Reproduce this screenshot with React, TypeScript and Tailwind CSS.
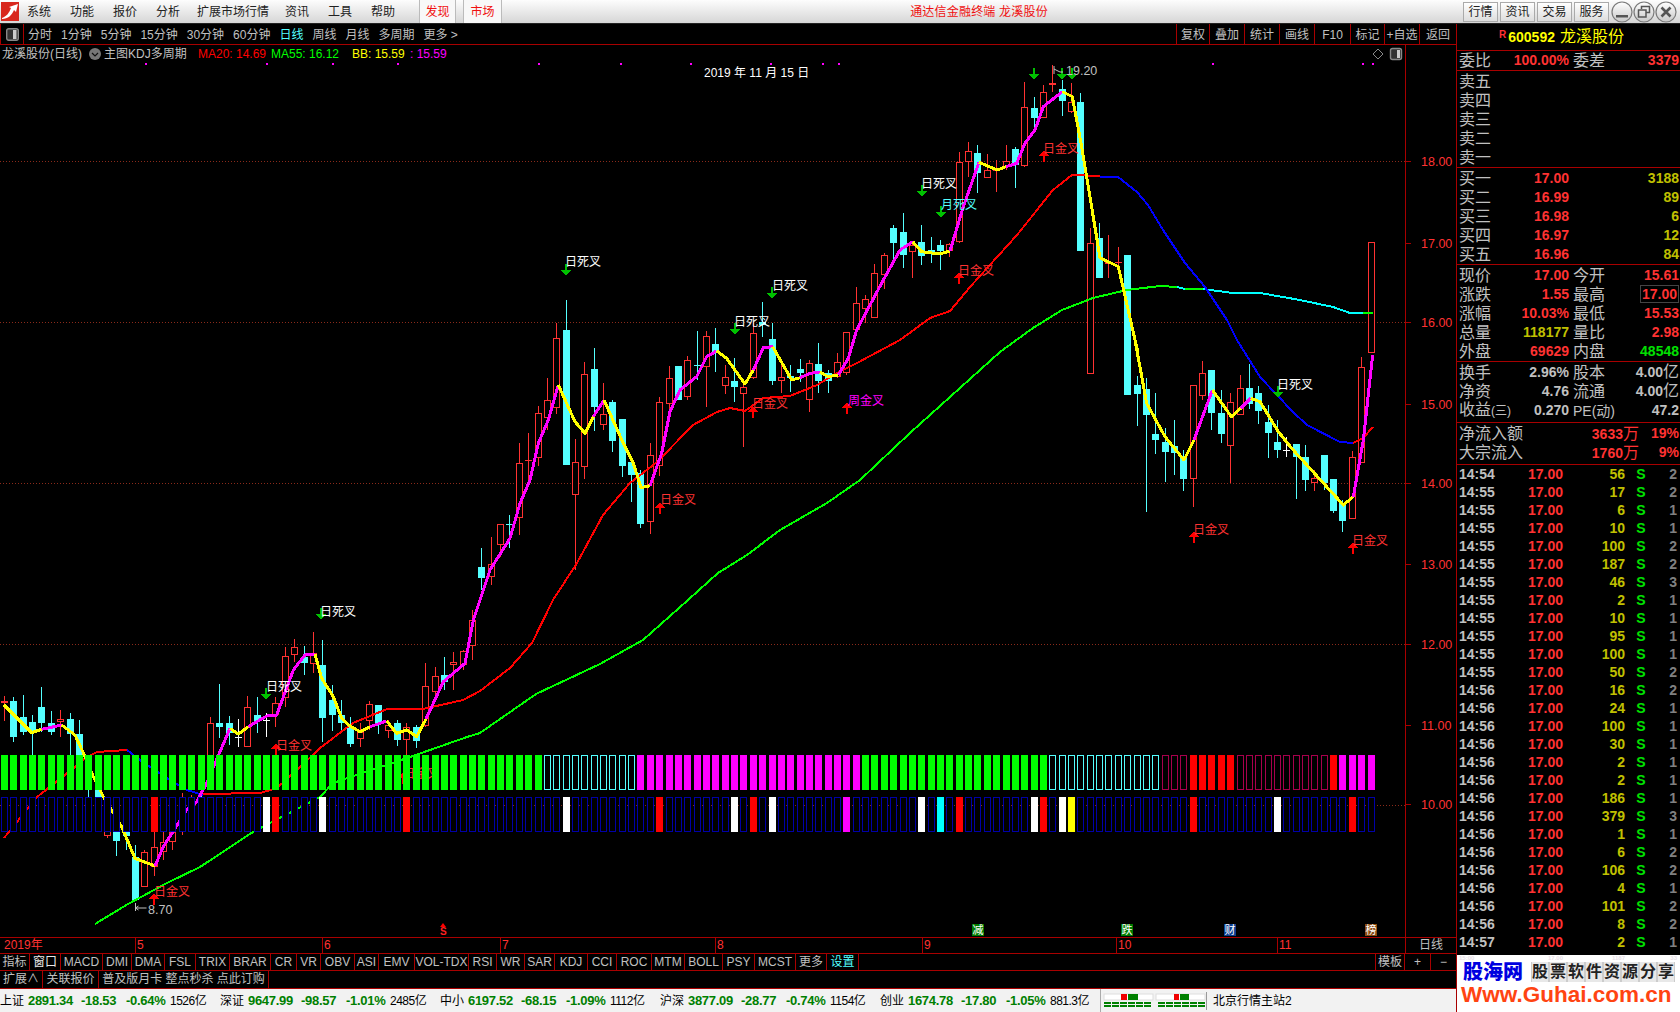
import React from "react";

type P = [number, number];
const z = (ox: number, oy: number, pts: P[]): P[] => pts.map(([X, Y]) => [ox + X / 3, oy + Y / 3] as P);
const z7 = (p: P[]) => z(0, 620, p);
const z8 = (p: P[]) => z(480, 280, p);
const z9 = (p: P[]) => z(900, 50, p);
const z10 = (p: P[]) => z(1000, 340, p);
const str = (p: P[]) => p.map((q) => q.join(",")).join(" ");

const RED = "#ff3232";
const CYAN = "#54ffff";

// idx, high, bodyTop, bodyBottom, low, colour
type C = [number, number, number, number, number, "r" | "c" | "w"];
const candles: C[] = [
  [0, 696, 701, 703, 721, "r"], [1, 697, 701, 737, 742, "c"], [2, 695, 717, 732, 735, "c"], [3, 715, 722, 732, 755, "c"],
  [4, 687, 707, 723, 732, "c"], [5, 711, 723, 732, 735, "c"], [6, 710, 719, 722, 737, "r"], [7, 713, 719, 734, 755, "c"],
  [8, 720, 734, 765, 785, "c"], [9, 760, 770, 790, 797, "c"], [10, 780, 785, 798, 800, "c"], [11, 800, 820, 836, 838, "r"],
  [12, 800, 815, 841, 856, "c"], [13, 810, 820, 836, 850, "c"], [14, 845, 857, 900, 900, "c"], [15, 850, 852, 887, 887, "r"],
  [16, 832, 847, 867, 876, "r"], [17, 830, 842, 852, 860, "r"], [18, 825, 832, 842, 850, "r"], [19, 793, 805, 830, 835, "r"],
  [20, 795, 800, 825, 830, "r"], [21, 795, 797, 828, 830, "c"], [22, 717, 723, 770, 790, "r"], [23, 684, 723, 727, 738, "c"],
  [24, 716, 723, 733, 745, "c"], [25, 719, 737, 737, 747, "w"], [26, 696, 707, 747, 747, "r"], [27, 697, 715, 721, 733, "c"],
  [28, 713, 720, 720, 737, "w"], [29, 697, 703, 715, 727, "r"], [30, 647, 656, 698, 707, "r"], [31, 639, 647, 655, 662, "r"],
  [32, 646, 657, 663, 675, "c"], [33, 632, 653, 664, 673, "r"], [34, 640, 665, 718, 742, "c"], [35, 685, 700, 715, 731, "c"],
  [36, 700, 715, 723, 733, "c"], [37, 717, 727, 744, 747, "c"], [38, 723, 732, 739, 747, "r"], [39, 701, 704, 721, 730, "r"],
  [40, 705, 705, 723, 734, "c"], [41, 720, 725, 731, 738, "r"], [42, 720, 723, 740, 746, "c"], [43, 723, 727, 740, 755, "r"],
  [44, 725, 727, 741, 748, "c"], [45, 663, 686, 726, 727, "r"], [46, 667, 676, 692, 700, "r"], [47, 657, 675, 682, 690, "c"],
  [48, 652, 662, 665, 690, "r"], [49, 650, 651, 665, 670, "r"], [50, 610, 620, 646, 660, "r"], [51, 548, 567, 578, 590, "c"],
  [52, 537, 564, 577, 585, "r"], [53, 524, 524, 545, 557, "r"], [54, 515, 524, 525, 548, "c"], [55, 443, 463, 518, 535, "r"],
  [56, 433, 460, 461, 480, "r"], [57, 406, 413, 458, 466, "r"], [58, 378, 400, 418, 430, "r"], [59, 323, 338, 408, 414, "r"],
  [60, 300, 330, 465, 465, "c"], [61, 439, 462, 495, 570, "r"], [62, 362, 374, 467, 479, "r"], [63, 348, 369, 407, 431, "c"],
  [64, 383, 414, 425, 430, "r"], [65, 400, 402, 441, 452, "c"], [66, 419, 419, 466, 477, "c"], [67, 460, 462, 475, 502, "c"],
  [68, 470, 473, 524, 528, "c"], [69, 443, 455, 522, 534, "r"], [70, 397, 402, 466, 476, "r"], [71, 366, 378, 404, 410, "r"],
  [72, 366, 366, 400, 400, "c"], [73, 356, 360, 397, 400, "r"], [74, 331, 365, 366, 380, "c"], [75, 331, 336, 367, 407, "r"],
  [76, 328, 344, 352, 372, "c"], [77, 365, 377, 386, 394, "r"], [78, 358, 381, 387, 402, "c"], [79, 382, 387, 394, 447, "r"],
  [80, 322, 333, 378, 379, "r"], [81, 302, 322, 325, 337, "c"], [82, 323, 339, 381, 385, "c"], [83, 360, 377, 381, 393, "r"],
  [84, 365, 376, 378, 392, "c"], [85, 359, 369, 373, 382, "c"], [86, 360, 363, 400, 412, "r"], [87, 343, 364, 381, 393, "c"],
  [88, 370, 373, 381, 393, "c"], [89, 353, 362, 377, 378, "r"], [90, 332, 332, 373, 375, "r"], [91, 287, 303, 330, 330, "r"],
  [92, 295, 299, 309, 323, "r"], [93, 264, 273, 318, 318, "r"], [94, 253, 255, 275, 289, "r"], [95, 225, 228, 243, 262, "c"],
  [96, 213, 232, 255, 268, "c"], [97, 242, 245, 252, 278, "r"], [98, 225, 242, 256, 265, "c"], [99, 237, 250, 253, 263, "c"],
  [100, 240, 245, 251, 270, "c"], [101, 243, 244, 251, 257, "r"], [102, 152, 162, 242, 243, "r"], [103, 142, 151, 162, 177, "r"],
  [104, 145, 153, 173, 193, "c"], [105, 154, 170, 178, 178, "r"], [106, 160, 170, 171, 192, "r"], [107, 145, 161, 167, 170, "r"],
  [108, 147, 149, 165, 188, "c"], [109, 82, 107, 166, 167, "r"], [110, 97, 108, 118, 128, "c"], [111, 85, 92, 118, 118, "r"],
  [112, 65, 83, 85, 92, "r"], [113, 80, 89, 101, 116, "c"], [114, 83, 102, 112, 113, "r"], [115, 93, 102, 251, 251, "c"],
  [116, 228, 243, 374, 374, "r"], [117, 223, 238, 278, 278, "c"], [118, 235, 262, 264, 278, "r"], [119, 247, 262, 263, 273, "r"],
  [120, 255, 255, 395, 395, "c"], [121, 376, 385, 394, 426, "c"], [122, 378, 389, 415, 512, "c"], [123, 393, 434, 440, 454, "c"],
  [124, 428, 442, 452, 482, "c"], [125, 420, 446, 453, 475, "c"], [126, 450, 457, 479, 491, "c"], [127, 385, 385, 479, 507, "r"],
  [128, 361, 373, 396, 400, "r"], [129, 370, 370, 413, 430, "c"], [130, 390, 413, 434, 443, "c"], [131, 393, 402, 446, 483, "r"],
  [132, 375, 388, 415, 415, "r"], [133, 364, 388, 404, 409, "c"], [134, 386, 393, 411, 424, "c"], [135, 405, 422, 433, 458, "c"],
  [136, 420, 442, 450, 458, "c"], [137, 437, 450, 450, 457, "w"], [138, 444, 444, 457, 499, "c"], [139, 445, 457, 480, 491, "c"],
  [140, 470, 478, 483, 491, "r"], [141, 455, 455, 483, 490, "c"], [142, 479, 479, 511, 513, "c"], [143, 500, 503, 521, 532, "c"],
  [144, 451, 457, 519, 519, "r"], [145, 357, 367, 463, 463, "r"], [146, 242, 242, 353, 353, "r"],
];

const kdj: { c: string; p: P[] }[] = [
  { c: "y", p: z7([[12, 255], [95, 338], [125, 328]]) },
  { c: "m", p: z7([[125, 328], [185, 315]]) },
  { c: "y", p: z7([[185, 315], [225, 345], [260, 420], [280, 470], [310, 530], [335, 570], [365, 620], [405, 715], [465, 738]]) },
  { c: "m", p: z7([[465, 738], [490, 680], [535, 610], [560, 570], [590, 545], [620, 490], [645, 430], [690, 325]]) },
  { c: "y", p: z7([[690, 325], [715, 342], [745, 320]]) },
  { c: "m", p: z7([[745, 320], [800, 288], [830, 285], [880, 150], [915, 105], [945, 103]]) },
  { c: "y", p: z7([[945, 103], [965, 175], [1000, 230], [1025, 295], [1050, 318], [1080, 335], [1110, 320]]) },
  { c: "m", p: z7([[1110, 320], [1160, 303]]) },
  { c: "y", p: z7([[1160, 303], [1190, 340], [1220, 330], [1250, 350], [1278, 297]]) },
  { c: "m", p: [...z7([[1278, 297], [1330, 185], [1395, 130], [1420, 0]]), ...z8([[0, 960], [30, 870], [90, 775], [120, 670], [150, 600], [175, 490], [205, 420], [235, 315]])] },
  { c: "y", p: z8([[235, 315], [285, 425], [315, 460], [340, 410]]) },
  { c: "m", p: z8([[340, 410], [372, 360]]) },
  { c: "y", p: z8([[372, 360], [430, 490], [460, 550], [483, 623], [510, 617]]) },
  { c: "m", p: z8([[510, 617], [545, 520], [570, 395], [600, 330], [650, 290], [680, 230], [710, 213]]) },
  { c: "y", p: z8([[710, 213], [740, 235], [795, 312], [820, 270]]) },
  { c: "m", p: z8([[820, 270], [850, 203], [878, 200]]) },
  { c: "y", p: z8([[878, 200], [935, 300], [960, 293]]) },
  { c: "m", p: z8([[960, 293], [990, 280], [1020, 277]]) },
  { c: "y", p: z8([[1020, 277], [1045, 290], [1075, 285]]) },
  { c: "m", p: [...z8([[1075, 285], [1105, 235], [1130, 150], [1210, 0]]), ...z9([[0, 600], [38, 575]])] },
  { c: "y", p: z9([[38, 575], [65, 605], [120, 612], [150, 603]]) },
  { c: "m", p: z9([[150, 603], [190, 470], [237, 337]]) },
  { c: "y", p: z9([[237, 337], [292, 360], [318, 350]]) },
  { c: "m", p: z9([[318, 350], [350, 340], [375, 280], [405, 240], [430, 170], [487, 125]]) },
  { c: "y", p: [...z9([[487, 125], [517, 140], [545, 290], [600, 623], [655, 650], [712, 900]]), ...z10([[405, 0], [440, 190], [495, 290], [552, 360], [582, 300]])] },
  { c: "m", p: z10([[582, 300], [637, 150]]) },
  { c: "y", p: z10([[637, 150], [694, 230], [722, 205]]) },
  { c: "m", p: z10([[722, 205], [752, 175]]) },
  { c: "y", p: z10([[752, 175], [780, 185], [835, 275], [875, 325], [1030, 495], [1060, 470]]) },
  { c: "m", p: z10([[1060, 470], [1090, 300], [1118, 45]]) },
];

const ma20Red1: P[] = [[4, 838], [37, 797], [75, 767], [85, 758], [97, 752], [127, 750]];
const ma20Blue1: P[] = [[127, 750], [140, 760], [168, 779], [187, 790], [203, 795]];
const ma20Red2: P[] = [[203, 794], [260, 793], [277, 788], [300, 767], [320, 748], [353, 723], [387, 709], [423, 709], [463, 700], [480, 691], [510, 668], [532, 643], [553, 600], [577, 563], [603, 515], [630, 483], [657, 462], [693, 425], [717, 412], [730, 408], [745, 411], [763, 398], [790, 396], [817, 385], [837, 373], [857, 363], [900, 340], [930, 318], [950, 311], [970, 287], [1017, 235], [1053, 190], [1072, 175], [1100, 176]];
const ma20Blue2: P[] = [[1100, 177], [1118, 177], [1137, 192], [1148, 205], [1163, 230], [1185, 263], [1205, 287], [1227, 320], [1237, 340], [1260, 377], [1293, 412], [1307, 425], [1340, 442], [1353, 443]];
const ma20Red3: P[] = [[1353, 443], [1363, 438], [1373, 427]];
const ma55A: P[] = [[95, 924], [128, 904], [167, 883], [200, 867], [253, 832], [320, 797], [333, 783], [410, 757], [467, 737], [480, 733], [536, 694], [600, 664], [643, 640], [688, 600], [718, 573], [747, 555], [780, 530], [827, 503], [860, 480], [910, 433], [960, 388], [1000, 352], [1033, 328], [1062, 310], [1093, 298], [1127, 290], [1160, 286], [1177, 287]];

const stripOne = (i: number): [string, string] => {
  if (i <= 57) return ["#00ff00", "#00ff00"];
  if (i <= 67) return ["#000", CYAN];
  if (i <= 91) return ["#ff00ff", "#ff00ff"];
  if (i <= 111) return ["#00ff00", "#00ff00"];
  if (i <= 123) return ["#000", CYAN];
  if (i <= 126) return ["#000", "#a8004c"];
  if (i <= 131) return ["#ff0000", "#ff0000"];
  if (i <= 141) return ["#000", "#a8004c"];
  if (i === 142) return ["#ff0000", "#ff0000"];
  return ["#ff00ff", "#ff00ff"];
};
const specials: Record<number, string> = {
  16: "#ff0000", 28: "#fff", 29: "#ff0000", 34: "#fff", 43: "#ff0000", 60: "#fff", 70: "#ff0000", 78: "#fff", 80: "#ff0000", 82: "#fff",
  90: "#ff00ff", 98: "#fff", 100: "#00ffff", 102: "#ff0000", 110: "#fff", 111: "#ff0000", 113: "#fff", 114: "#ffff00", 127: "#ff0000", 136: "#fff", 144: "#ff0000",
};

const labels: [string, number, number, string][] = [
  ["日死叉", 266, 691, "#fff"], ["日金叉", 276, 750, RED], ["日金叉", 154, 896, RED], ["日死叉", 320, 616, "#fff"],
  ["日死叉", 734, 326, "#fff"], ["日死叉", 772, 290, "#fff"], ["日金叉", 752, 408, RED], ["周金叉", 848, 405, "#ff00ff"],
  ["日金叉", 660, 504, RED], ["日死叉", 565, 266, "#fff"], ["日死叉", 921, 188, "#fff"], ["月死叉", 941, 209, CYAN],
  ["日金叉", 958, 275, RED], ["日金叉", 1043, 153, RED], ["日死叉", 1277, 389, "#fff"], ["日金叉", 1193, 534, RED],
  ["日金叉", 1352, 545, RED], ["日金叉", 403, 778, RED],
];
const downArrows: [number, number][] = [[266, 688], [321, 608], [735, 323], [772, 287], [566, 264], [922, 185], [941, 206], [1278, 386], [1034, 68], [1062, 68], [1072, 68]];
const upArrows: [number, number][] = [[276, 743], [154, 893], [753, 406], [847, 402], [660, 502], [959, 272], [1044, 150], [1194, 531], [1353, 542], [403, 772]];
const axis: [string, number][] = [["18.00", 161], ["17.00", 243], ["16.00", 322], ["15.00", 404], ["14.00", 483], ["13.00", 564], ["12.00", 644], ["11.00", 725], ["10.00", 804]];
const dots = [145, 266, 332, 397, 538, 620, 690, 770, 822, 838, 1212, 1362, 1372];

function Chart() {
  return (
    <svg viewBox="0 45 1456 892" width={1456} height={892} className="block">
      <g shapeRendering="crispEdges">
        {[161, 322, 483, 644, 805].map((y) => (
          <line key={y} x1={0} x2={1405} y1={y + 0.5} y2={y + 0.5} stroke="#8a2a1a" strokeDasharray="1 2" />
        ))}
        {candles.map(([i, hi, top, bot, lo, c]) => {
          const left = Math.round(1 + i * 9.36);
          const col = c === "r" ? RED : c === "c" ? CYAN : "#fff";
          const flat = bot - top <= 1;
          return (
            <g key={i}>
              <rect x={left + 3} y={hi} width={1} height={lo - hi} fill={col} />
              {flat ? (
                <rect x={left} y={top} width={7} height={1} fill={col} />
              ) : c === "c" ? (
                <rect x={left} y={top} width={7} height={bot - top} fill={col} />
              ) : (
                <rect x={left + 0.5} y={top + 0.5} width={6} height={bot - top - 1} fill="#000" stroke={col} />
              )}
            </g>
          );
        })}
        <polyline points={str(ma55A)} fill="none" stroke="#00ff00" strokeWidth={2} />
        <polyline points={str([[1177, 287], [1185, 289]])} fill="none" stroke="#00ffff" strokeWidth={2} />
        <polyline points={str([[1185, 289], [1203, 289]])} fill="none" stroke="#00ff00" strokeWidth={2} />
        <polyline points={str([[1203, 289], [1233, 293], [1260, 293], [1300, 300], [1333, 307], [1350, 313], [1363, 313]])} fill="none" stroke="#00ffff" strokeWidth={2} />
        <polyline points={str([[1363, 313], [1373, 313]])} fill="none" stroke="#00ff00" strokeWidth={2} />
        {[ma20Red1, ma20Red2, ma20Red3].map((p, i) => (
          <polyline key={i} points={str(p)} fill="none" stroke="#ff0000" strokeWidth={2} />
        ))}
        {[ma20Blue1, ma20Blue2].map((p, i) => (
          <polyline key={i} points={str(p)} fill="none" stroke="#0000ff" strokeWidth={2} />
        ))}
        {kdj.map((s, i) => (
          <polyline key={i} points={str(s.p)} fill="none" stroke={s.c === "y" ? "#ffff00" : "#ff00ff"} strokeWidth={3} strokeLinejoin="round" />
        ))}
        {downArrows.map(([x, y], i) => (
          <path key={i} d={`M${x - 1} ${y}h2v6h4l-5 6l-5 -6h4z`} fill="#00c000" />
        ))}
        {upArrows.map(([x, y], i) => (
          <path key={i} d={`M${x} ${y}l5 6h-4v6h-2v-6h-4z`} fill="#ff0000" />
        ))}
      </g>
      {labels.map(([t, x, y, c], i) => (
        <text key={i} x={x} y={y} fill={c} fontSize={12}>{t}</text>
      ))}
      <g shapeRendering="crispEdges">
        {Array.from({ length: 147 }, (_, i) => {
          const x = Math.round(1 + i * 9.36);
          const [f, s] = stripOne(i);
          const sp = specials[i];
          return (
            <g key={i}>
              <rect x={x + 0.5} y={755.5} width={6} height={34} fill={f} stroke={s} />
              <rect x={x + 0.5} y={797.5} width={6} height={34} fill={sp ?? "#000"} stroke={sp ?? "#0000a8"} />
            </g>
          );
        })}
        {dots.map((x) => (
          <rect key={x} x={x} y={63} width={2} height={2} fill="#ff00ff" />
        ))}
        <line x1={1405.5} x2={1405.5} y1={45} y2={937} stroke="#a80000" />
        {axis.map(([, y]) => (
          <rect key={y} x={1405} y={y} width={6} height={1} fill="#a80000" />
        ))}
      </g>
      {axis.map(([t, y]) => (
        <text key={t} x={1421} y={y + 5} fill={RED} fontSize={12.5}>{t}</text>
      ))}
      <text x={2} y={58} fill="#c0c0c0" fontSize={12}>龙溪股份(日线)</text>
      <circle cx={95} cy={54} r={6} fill="#777" />
      <path d="M92 53l3 3l3 -3" fill="none" stroke="#111" strokeWidth={1.2} />
      <text x={104} y={58} fill="#c0c0c0" fontSize={12}>主图KDJ多周期</text>
      <text x={198} y={58} fill="#ff0000" fontSize={12}>MA20: 14.69</text>
      <text x={271} y={58} fill="#00ff00" fontSize={12}>MA55: 16.12</text>
      <text x={352} y={58} fill="#ffff00" fontSize={12}>BB: 15.59</text>
      <text x={410} y={58} fill="#ff00ff" fontSize={12}>: 15.59</text>
      <text x={704} y={77} fill="#fff" fontSize={12}>2019 年 11 月 15 日</text>
      <path d="M1378 49l5 5l-5 5l-5 -5z" fill="none" stroke="#888" />
      <rect x={1390.5} y={48.5} width={11} height={11} rx={2} fill="#333" stroke="#888" strokeWidth={1.4} />
      <rect x={1397} y={50} width={3} height={8} fill="#ccc" />
      <path d="M135.5 903v8M135.5 908h11M135.5 908l3 -2M135.5 908l3 2" stroke="#c0c0c0" fill="none" />
      <text x={148} y={914} fill="#c0c0c0" fontSize={12.5}>8.70</text>
      <path d="M1054 66v8M1054 69l6 3h3" stroke="#c0c0c0" fill="none" />
      <text x={1066} y={75} fill="#c0c0c0" fontSize={12.5}>19.20</text>
      <path d="M443 923l3 4h-6z" fill="#ff0000" />
      <text x={440} y={935} fill="#ff2020" fontSize={10} fontWeight={700}>S</text>
      <rect x={972} y={924} width={12} height={12} fill="#007a00" />
      <text x={972.5} y={934} fill="#fff" fontSize={11}>减</text>
      <rect x={1121} y={924} width={12} height={12} fill="#007a00" />
      <text x={1121.5} y={934} fill="#fff" fontSize={11}>跌</text>
      <rect x={1224} y={924} width={12} height={12} fill="#0c3c8c" />
      <text x={1224.5} y={934} fill="#fff" fontSize={11}>财</text>
      <rect x={1365} y={924} width={12} height={12} fill="#8a4a10" />
      <text x={1365.5} y={934} fill="#fff" fontSize={11}>榜</text>
    </svg>
  );
}

function WinBtn({ kind }: { kind: "min" | "max" | "close" }) {
  return (
    <svg width={22} height={22} viewBox="0 0 22 22">
      <defs>
        <linearGradient id={`b${kind}`} x1="0" y1="0" x2="0" y2="1">
          <stop offset="0" stopColor="#ffffff" />
          <stop offset="1" stopColor="#c8c8c8" />
        </linearGradient>
      </defs>
      <circle cx={11} cy={11} r={10} fill={`url(#b${kind})`} stroke="#7a7a7a" strokeWidth={1.2} />
      {kind === "min" && <rect x={5} y={14} width={12} height={2.5} fill="#555" />}
      {kind === "max" && (
        <path d="M8.5 8V5.5h8v6h-3M5.5 9h7.5v7H5.5z" fill="none" stroke="#555" strokeWidth={1.5} />
      )}
      {kind === "close" && <path d="M6.5 6.5l9 9M15.5 6.5l-9 9" stroke="#555" strokeWidth={2.6} />}
    </svg>
  );
}

function TopBar() {
  const item = "text-[12px] text-[#222]";
  return (
    <div className="flex h-[24px] items-center border-b border-[#222] bg-gradient-to-b from-[#fdfdfd] to-[#d6d6d6]">
      <svg width={18} height={19} viewBox="0 0 18 19" className="ml-[1px] shrink-0">
        <rect width={18} height={19} fill="#d8281e" />
        <path d="M1 16C6 14 8 11 10 6L8 5L17 2L15 10L13 8C11 13 7 17 1 17Z" fill="#fff" />
      </svg>
      <span className={`${item} ml-[8px]`}>系统</span>
      <span className={`${item} ml-[19px]`}>功能</span>
      <span className={`${item} ml-[19px]`}>报价</span>
      <span className={`${item} ml-[19px]`}>分析</span>
      <span className={`${item} ml-[17px]`}>扩展市场行情</span>
      <span className={`${item} ml-[16px]`}>资讯</span>
      <span className={`${item} ml-[19px]`}>工具</span>
      <span className={`${item} ml-[19px]`}>帮助</span>
      <span className="ml-[24px] flex h-full w-[37px] items-center justify-center border-x border-[#bbb] bg-[#f8f8f8] text-[12px] text-[#f01010]">发现</span>
      <span className="ml-[7px] flex h-full w-[39px] items-center justify-center border-x border-[#bbb] bg-[#f8f8f8] text-[12px] text-[#f01010]">市场</span>
      <span className="ml-[408px] text-[12px] tracking-[0.2px] text-[#f01010]">通达信金融终端 龙溪股份</span>
      <div className="ml-auto flex items-center">
        {["行情", "资讯", "交易", "服务"].map((t) => (
          <span key={t} className="mr-[2px] flex h-[20px] w-[35px] items-center justify-center border border-[#aaa] bg-gradient-to-b from-[#fff] to-[#ddd] text-[12px] text-[#222]">{t}</span>
        ))}
        <div className="mr-[3px] flex">
          <WinBtn kind="min" />
          <WinBtn kind="max" />
          <WinBtn kind="close" />
        </div>
      </div>
    </div>
  );
}

function Toolbar() {
  return (
    <div className="flex h-[21px] items-center border-b border-[#a80000] text-[12px] text-[#c0c0c0]">
      <div className="flex h-full w-[24px] items-center justify-center border-x border-[#a80000]">
        <svg width={13} height={13} viewBox="0 0 13 13">
          <rect x={0.7} y={0.7} width={11.6} height={11.6} rx={2} fill="#333" stroke="#888" strokeWidth={1.4} />
          <rect x={7} y={2} width={3.5} height={9} fill="#ccc" />
        </svg>
      </div>
      <div className="ml-[4px] flex gap-[9px] pt-[1px]">
        <span>分时</span><span>1分钟</span><span>5分钟</span><span>15分钟</span><span>30分钟</span><span>60分钟</span>
        <span className="text-[#54ffff]">日线</span><span>周线</span><span>月线</span><span>多周期</span><span>更多 &gt;</span>
      </div>
      <div className="ml-auto flex h-full">
        {[["复权", "w-[33px]"], ["叠加", "w-[35px]"], ["统计", "w-[35px]"], ["画线", "w-[35px]"], ["F10", "w-[36px]"], ["标记", "w-[34px]"], ["+自选", "w-[35px]"], ["返回", "w-[37px]"]].map(([t, w]) => (
          <span key={t} className={`${w} flex items-center justify-center border-l border-[#a80000] pt-[1px]`}>{t}</span>
        ))}
      </div>
    </div>
  );
}

function DateAxis() {
  const marks: [string, string][] = [
    ["2019年", "w-[135px]"], ["5", "w-[187px]"], ["6", "w-[178px]"], ["7", "w-[215px]"], ["8", "w-[207px]"], ["9", "w-[194px]"], ["10", "w-[161px]"], ["11", "w-[128px]"],
  ];
  return (
    <div className="flex h-[16px] border-t border-[#a80000] text-[12px] leading-[15px] text-[#ff3232]">
      {marks.map(([t, w], i) => (
        <span key={t} className={`${w} ${i === 0 ? "pl-[4px]" : "border-l border-[#a80000] pl-[1px]"}`}>{t}</span>
      ))}
      <span className="w-[51px] border-l border-[#a80000] text-center text-[#c0c0c0]">日线</span>
    </div>
  );
}

function Tabs() {
  const tabs: [string, string, string?][] = [
    ["指标", "w-[30px]"], ["窗口", "w-[31px]", "text-[#e8e8e8]"], ["MACD", "w-[42px]"], ["DMI", "w-[29px]"], ["DMA", "w-[33px]"], ["FSL", "w-[31px]"], ["TRIX", "w-[34px]"], ["BRAR", "w-[41px]"],
    ["CR", "w-[26px]"], ["VR", "w-[24px]"], ["OBV", "w-[34px]"], ["ASI", "w-[24px]"], ["EMV", "w-[36px]"], ["VOL-TDX", "w-[54px]"], ["RSI", "w-[28px]"], ["WR", "w-[28px]"], ["SAR", "w-[30px]"],
    ["KDJ", "w-[33px]"], ["CCI", "w-[29px]"], ["ROC", "w-[35px]"], ["MTM", "w-[33px]"], ["BOLL", "w-[38px]"], ["PSY", "w-[32px]"], ["MCST", "w-[41px]"], ["更多", "w-[31px]"], ["设置", "w-[32px]", "text-[#54ffff]"],
  ];
  return (
    <>
      <div className="flex h-[17px] border-t border-[#a80000] text-[12px] leading-[16px] text-[#c0c0c0]">
        {tabs.map(([t, w, c]) => (
          <span key={t} className={`${w} ${c ?? ""} shrink-0 border-r border-[#a80000] text-center`}>{t}</span>
        ))}
        <span className="ml-auto w-[30px] border-x border-[#a80000] text-center">模板</span>
        <span className="w-[26px] border-r border-[#a80000] text-center">+</span>
        <span className="w-[25px] text-center">−</span>
      </div>
      <div className="flex h-[18px] border-t border-[#a80000] text-[12px] leading-[17px] text-[#c0c0c0]">
        <span className="w-[43px] border-r border-[#a80000] text-center">扩展∧</span>
        <span className="w-[56px] border-r border-[#a80000] text-center">关联报价</span>
        <span className="w-[170px] border-r border-[#a80000] text-center">普及版月卡 整点秒杀 点此订购</span>
      </div>
    </>
  );
}

function StatusBar() {
  const groups = [
    ["上证", "2891.34", "-18.53", "-0.64%", "1526亿"],
    ["深证", "9647.99", "-98.57", "-1.01%", "2485亿"],
    ["中小", "6197.52", "-68.15", "-1.09%", "1112亿"],
    ["沪深", "3877.09", "-28.77", "-0.74%", "1154亿"],
    ["创业", "1674.78", "-17.80", "-1.05%", "881.3亿"],
  ];
  return (
    <div className="flex h-[24px] items-center border-t border-[#a80000] bg-[#f2f2f2] text-[12px] text-black">
      {groups.map((g) => (
        <div key={g[0]} className="grid w-[220px] grid-cols-[28px_53px_45px_44px_50px] items-center">
          <span>{g[0]}</span>
          <span className="text-[13px] font-bold tracking-[-0.3px] text-[#008000]">{g[1]}</span>
          <span className="text-[13px] font-bold tracking-[-0.3px] text-[#008000]">{g[2]}</span>
          <span className="text-[13px] font-bold tracking-[-0.3px] text-[#008000]">{g[3]}</span>
          <span className="tracking-[-0.5px]">{g[4]}</span>
        </div>
      ))}
      <svg width={106} height={23} viewBox="0 0 106 23" className="shrink-0">
        <rect x={0} y={0} width={1} height={23} fill="#aaa" />
        <rect x={4} y={5} width={49} height={6} fill="#fff" stroke="#ddd" />
        <rect x={56} y={5} width={49} height={6} fill="#fff" stroke="#ddd" />
        <rect x={21} y={5} width={6} height={6} fill="#f00000" />
        <rect x={28} y={5} width={10} height={6} fill="#008000" />
        <rect x={74} y={5} width={5} height={6} fill="#f00000" />
        <rect x={80} y={5} width={9} height={6} fill="#008000" />
        {[4, 12, 20, 28, 36, 44, 58, 66, 74, 82, 90, 98].map((x) => (
          <g key={x}>
            <rect x={x} y={13} width={7} height={2} fill="#008000" />
            <rect x={x} y={16} width={7} height={2} fill="#008000" />
          </g>
        ))}
      </svg>
      <span className="border-l border-[#999] pl-[6px]">北京行情主站2</span>
    </div>
  );
}

const val = "text-[14px] font-bold";
function Row({ l, v, c, l2, v2, c2 }: { l: React.ReactNode; v?: React.ReactNode; c?: string; l2?: React.ReactNode; v2?: React.ReactNode; c2?: string }) {
  return (
    <div className="grid h-[19px] grid-cols-[110px_111px] items-center pl-[2px] text-[16px] leading-[19px] text-[#c0c0c0]">
      <div className="flex items-center justify-between">
        <span>{l}</span>
        <span className={`${val} ${c ?? ""}`}>{v}</span>
      </div>
      <div className="flex items-center justify-between pl-[4px] pr-[1px]">
        <span>{l2}</span>
        <span className={`${val} ${c2 ?? ""}`}>{v2}</span>
      </div>
    </div>
  );
}

const rr = "text-[#ff3232]";
const ol = "text-[#c0c000]";
const gr = "text-[#c0c0c0]";
const Yi = ({ n }: { n: string }) => (
  <>
    {n}
    <span className="text-[16px] font-normal">亿</span>
  </>
);
const trades: [string, string, string][] = [
  ["14:54", "56", "2"], ["14:55", "17", "2"], ["14:55", "6", "1"], ["14:55", "10", "1"], ["14:55", "100", "2"], ["14:55", "187", "2"], ["14:55", "46", "3"],
  ["14:55", "2", "1"], ["14:55", "10", "1"], ["14:55", "95", "1"], ["14:55", "100", "1"], ["14:55", "50", "2"], ["14:56", "16", "2"], ["14:56", "24", "1"],
  ["14:56", "100", "1"], ["14:56", "30", "1"], ["14:56", "2", "1"], ["14:56", "2", "1"], ["14:56", "186", "1"], ["14:56", "379", "3"], ["14:56", "1", "1"],
  ["14:56", "6", "2"], ["14:56", "106", "2"], ["14:56", "4", "1"], ["14:56", "101", "2"], ["14:56", "8", "2"], ["14:57", "2", "1"],
];

function Watermark() {
  return (
    <div className="h-[57px] overflow-hidden bg-white">
      <div className="grid h-[6px] grid-cols-[50px_54px_62px_32px_20px] pl-[2px] pr-[4px] text-[6px] font-bold leading-[6px] text-[#e8e0e8]">
        <span>15:00</span><span className="text-right">17.00</span><span className="text-right">1187</span><span /><span className="text-right">33</span>
      </div>
      <div className="flex items-center pl-[6px]">
        <span className="w-[68px] text-[20px] font-black leading-[22px] text-[#0000e0]">股海网</span>
        <div className="flex">
          {["股", "票", "软", "件", "资", "源", "分", "享"].map((t) => (
            <span key={t} className="w-[18px] border-x border-[#ccc] bg-[#e8e8e8] text-center text-[16px] font-bold leading-[20px] text-[#222]">{t}</span>
          ))}
        </div>
      </div>
      <div className="pl-[4px] text-[22.5px] font-bold leading-[24px] text-[#ff4412]">Www.Guhai.com.cn</div>
    </div>
  );
}

function RightPanel() {
  return (
    <div className="flex w-[224px] flex-col border-l border-[#a80000]">
      <div className="flex h-[27px] items-center border-b border-[#a80000] pl-[42px] text-[#ffff00]">
        <span className="mb-[6px] mr-[2px] text-[10px] font-bold text-[#ff3232]">R</span>
        <span className="text-[14px] font-bold">600592</span>
        <span className="ml-[5px] text-[16px]">龙溪股份</span>
      </div>
      <div className="h-[20px] border-b border-[#a80000]">
        <Row l="委比" v="100.00%" c={rr} l2="委差" v2="3379" c2={rr} />
      </div>
      <div className="h-[97px] border-b border-[#a80000] pt-[1px]">
        {["卖五", "卖四", "卖三", "卖二", "卖一"].map((t) => <Row key={t} l={t} />)}
      </div>
      <div className="h-[97px] border-b border-[#a80000] pt-[1px]">
        <Row l="买一" v="17.00" c={rr} v2="3188" c2={ol} />
        <Row l="买二" v="16.99" c={rr} v2="89" c2={ol} />
        <Row l="买三" v="16.98" c={rr} v2="6" c2={ol} />
        <Row l="买四" v="16.97" c={rr} v2="12" c2={ol} />
        <Row l="买五" v="16.96" c={rr} v2="84" c2={ol} />
      </div>
      <div className="h-[97px] border-b border-[#a80000] pt-[1px]">
        <Row l="现价" v="17.00" c={rr} l2="今开" v2="15.61" c2={rr} />
        <Row l="涨跌" v="1.55" c={rr} l2="最高" v2={<span className="border border-[#444] px-[1px]">17.00</span>} c2={rr} />
        <Row l="涨幅" v="10.03%" c={rr} l2="最低" v2="15.53" c2={rr} />
        <Row l="总量" v="118177" c={ol} l2="量比" v2="2.98" c2={rr} />
        <Row l="外盘" v="69629" c={rr} l2="内盘" v2="48548" c2="text-[#00e000]" />
      </div>
      <div className="h-[61px] border-b border-[#a80000]">
        <Row l="换手" v="2.96%" c={gr} l2="股本" v2={<Yi n="4.00" />} c2={gr} />
        <Row l="净资" v="4.76" c={gr} l2="流通" v2={<Yi n="4.00" />} c2={gr} />
        <Row
          l={<>收益<span className="text-[12px]">(三)</span></>}
          v="0.270"
          c={gr}
          l2={<span className="text-[14px]">PE(动)</span>}
          v2="47.2"
          c2={gr}
        />
      </div>
      <div className="h-[42px] border-b border-[#a80000] pt-[1px]">
        {[["净流入额", "3633", "19%"], ["大宗流入", "1760", "9%"]].map(([a, b, d]) => (
          <div key={a} className="flex h-[19px] items-center pl-[2px] pr-[1px] text-[16px] text-[#c0c0c0]">
            <span>{a}</span>
            <span className={`ml-auto ${val} ${rr}`}>{b}<span className="text-[16px] font-normal">万</span></span>
            <span className={`w-[40px] text-right ${val} ${rr}`}>{d}</span>
          </div>
        ))}
      </div>
      <div className="h-[490px] overflow-hidden pl-[2px]">
        {trades.map(([t, q, n], i) => (
          <div key={i} className="grid h-[18px] grid-cols-[50px_54px_62px_32px_20px] items-center text-[14px] font-bold leading-[18px]">
            <span className="text-[#c0c0c0]">{t}</span>
            <span className="text-right text-[#ff3232]">17.00</span>
            <span className="text-right text-[#c0c000]">{q}</span>
            <span className="text-center text-[#00e000]">S</span>
            <span className="text-right text-[#808080]">{n}</span>
          </div>
        ))}
      </div>
      <Watermark />
    </div>
  );
}

export default function App() {
  return (
    <div className="flex h-[1012px] w-[1680px] flex-col overflow-hidden bg-black font-['Liberation_Sans','Noto_Sans_CJK_SC',sans-serif]">
      <TopBar />
      <div className="flex min-h-0 flex-1">
        <div className="flex w-[1456px] flex-col">
          <Toolbar />
          <Chart />
          <DateAxis />
          <Tabs />
          <StatusBar />
        </div>
        <RightPanel />
      </div>
    </div>
  );
}
